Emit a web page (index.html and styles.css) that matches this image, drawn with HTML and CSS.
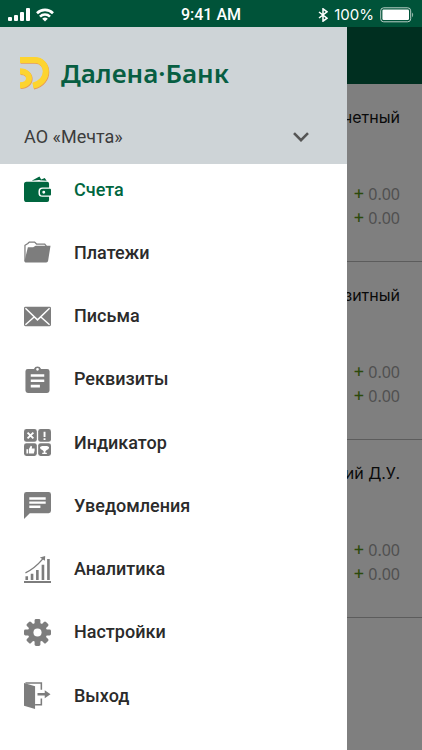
FILE: index.html
```html
<!DOCTYPE html>
<html lang="ru">
<head>
    <meta charset="UTF-8">
    <meta name="viewport" content="width=device-width, initial-scale=1.0">
    <title>Далена·Банк</title>
    <link rel="stylesheet" href="styles.css">
</head>
<body>
    <div class="status-bar">
        <div class="status-left">
            <svg width="24" height="14" viewBox="0 0 24 14" fill="#fff">
                <rect x="0" y="9" width="4" height="4" rx="1"/>
                <rect x="6" y="7" width="4" height="6" rx="1"/>
                <rect x="12" y="4" width="4" height="9" rx="1"/>
                <rect x="18" y="0" width="4" height="13" rx="1"/>
            </svg>
            <svg width="18" height="14" viewBox="0 0 18 14" fill="none" stroke="#fff" stroke-width="2.6">
                <path d="M1 5.2a11.4 11.4 0 0 1 16 0"/>
                <path d="M4 8.6a7 7 0 0 1 10 0"/>
                <path d="M9 13.5L6.2 10.8a4 4 0 0 1 5.6 0z" fill="#fff" stroke="none"/>
            </svg>
        </div>
        <div class="status-time">9:41 AM</div>
        <div class="status-right">
            <svg width="10" height="14" viewBox="0 0 10 14" fill="none" stroke="#fff" stroke-width="1.5">
                <path d="M1 4l8 6.2L5 13.2V.8l4 3L1 10"/>
            </svg>
            <span class="status-charge">100%</span>
            <svg width="34" height="16" viewBox="0 0 34 16">
                <rect x="0.7" y="0.8" width="30" height="14" rx="3" fill="none" stroke="#b9cfc7"/>
                <rect x="2.4" y="2.6" width="26.6" height="10.4" rx="1.2" fill="#fff"/>
                <path d="M32 5.6c1.6.9 1.6 3.7 0 4.6z" fill="#8fb2a5"/>
            </svg>
        </div>
    </div>

    <div class="screen">
        <div class="accounts">
            <div class="app-bar"></div>
            <div class="account">
                <div class="account-name">Расчетный</div>
                <div class="amount"><span class="plus">+</span> 0.00</div>
                <div class="amount"><span class="plus">+</span> 0.00</div>
            </div>
            <div class="account">
                <div class="account-name">Транзитный</div>
                <div class="amount"><span class="plus">+</span> 0.00</div>
                <div class="amount"><span class="plus">+</span> 0.00</div>
            </div>
            <div class="account">
                <div class="account-name">Текущий Д.У.</div>
                <div class="amount"><span class="plus">+</span> 0.00</div>
                <div class="amount"><span class="plus">+</span> 0.00</div>
            </div>
        </div>

        <div class="drawer">
            <div class="drawer-header">
                <div class="brand">
                    <svg width="31" height="34" viewBox="0 0 31 34" fill="none" stroke-width="6">
                        <g stroke="#e79a55">
                            <path d="M0.6 4.8H15c14.5 0 16 21.7-1.5 25.7"/>
                            <path d="M0.6 16c12 0 12 14 0 14"/>
                        </g>
                        <g stroke="#fdd42f">
                            <path d="M0 4h14.5c14.5 0 16 21.7-1.5 25.7"/>
                            <path d="M0 15.2c12 0 12 14 0 14"/>
                        </g>
                    </svg>
                    <span class="brand-name">Далена·Банк</span>
                </div>
                <button class="company" type="button">
                    <span>АО «Мечта»</span>
                    <svg width="16" height="10" viewBox="0 0 16 10" fill="none" stroke="#555" stroke-width="2.6">
                        <path d="M1 1.2l7 7 7-7"/>
                    </svg>
                </button>
            </div>

            <nav class="menu">
                <a class="menu-item active" href="#accounts">
                    <svg class="icon" viewBox="0 0 28 28">
                        <path d="M8 5L16 .6l2 3.4zM16 4.5L21.5 2l2 3z"/>
                        <path d="M3 6h21a2 2 0 0 1 2 2v4h-7a4 4 0 0 0-4 4v1.5a4 4 0 0 0 4 4h7V25a2 2 0 0 1-2 2H3a3 3 0 0 1-3-3V8.5A2.5 2.5 0 0 1 3 6z"/>
                        <path d="M19.5 13.3H27a1 1 0 0 1 1 1v5a1 1 0 0 1-1 1h-7.5a3 3 0 0 1-3-3v-1a3 3 0 0 1 3-3zm1 2a1.5 1.5 0 1 0 0 3 1.5 1.5 0 0 0 0-3z" fill-rule="evenodd"/>
                    </svg>
                    Счета
                </a>
                <a class="menu-item" href="#payments">
                    <svg class="icon" viewBox="0 0 28 28">
                        <path d="M1 23V6.5l3-1.8 1.5-1.5H11l2 2h8.5l1.5 2v1" fill="none" stroke="currentColor" stroke-width="1.3"/>
                        <path d="M4 8.5h5.5L12 7h15.5L25 22.5a2 2 0 0 1-2 1.8H1.5A1.5 1.5 0 0 1 .5 23z"/>
                    </svg>
                    Платежи
                </a>
                <a class="menu-item" href="#letters">
                    <svg class="icon" viewBox="0 0 28 28">
                        <rect x="0" y="4" width="28" height="20" rx="1.5"/>
                        <path d="M1.5 5.5l12.5 12 12.5-12M1.5 22.5l9-8M26.5 22.5l-9-8" fill="none" stroke="#fff" stroke-width="1.5"/>
                    </svg>
                    Письма
                </a>
                <a class="menu-item" href="#details">
                    <svg class="icon" viewBox="0 0 28 28">
                        <path d="M4 3h6.3a4 4 0 0 1 7.4 0H24a2.5 2.5 0 0 1 2.5 2.5v20A2.5 2.5 0 0 1 24 28H4a2.5 2.5 0 0 1-2.5-2.5v-20A2.5 2.5 0 0 1 4 3zm10-1a1.4 1.4 0 1 0 0 2.8A1.4 1.4 0 0 0 14 2zM7 8.5v2.7h14V8.5zm0 5.5v2.7h14V14zm0 5.5v2.7h9.5v-2.7z" fill-rule="evenodd"/>
                    </svg>
                    Реквизиты
                </a>
                <a class="menu-item" href="#indicator">
                    <svg class="icon" viewBox="0 0 28 28">
                        <rect x="0" y="0" width="13.3" height="13.3" rx="2.5"/>
                        <rect x="14.7" y="0" width="13.3" height="13.3" rx="2.5"/>
                        <rect x="0" y="14.7" width="13.3" height="13.3" rx="2.5"/>
                        <rect x="14.7" y="14.7" width="13.3" height="13.3" rx="2.5"/>
                        <path d="M3.7 3.7l6 6m0-6l-6 6M21.3 2.8v5.4m0 1.5v1.8" fill="none" stroke="#fff" stroke-width="2"/>
                        <path d="M2.5 21h1.7v4.5H2.5zM5 21l2-3.7c1.5 0 1.5 1 1 3h3v2l-.8 3.2H5z" fill="#fff"/>
                        <path d="M18 17.5h6.6v1H26c0 2-.8 3-2.4 3.3L22.2 23v1.5h1.5v1.3h-4.8v-1.3h1.5V23L19 21.8c-1.6-.3-2.4-1.3-2.4-3.3H18z" fill="#fff"/>
                    </svg>
                    Индикатор
                </a>
                <a class="menu-item" href="#notifications">
                    <svg class="icon" viewBox="0 0 28 28">
                        <path d="M2.5 0h23A2.5 2.5 0 0 1 28 2.5v17a2.5 2.5 0 0 1-2.5 2.5H6l-6 6V2.5A2.5 2.5 0 0 1 2.5 0zM5.5 5.5V8h17V5.5zm0 4.3v2.5h17V9.8zm0 4.2v2.5H17V14z" fill-rule="evenodd"/>
                    </svg>
                    Уведомления
                </a>
                <a class="menu-item" href="#analytics">
                    <svg class="icon" viewBox="0 0 28 28">
                        <path d="M0 26h28v2H0zM1.5 21h2.7v4H1.5zM7 18.5h2.7V25H7zM12.5 14.5h2.7V25h-2.7zM18.3 9H21v16h-2.7zM24 3h2.7v22H24z"/>
                        <path d="M1.5 17.5C9 14 14.5 9 20 2.5" fill="none" stroke="currentColor" stroke-width="1.4"/>
                        <path d="M16.5 1.5L22 0l-.3 5z"/>
                    </svg>
                    Аналитика
                </a>
                <a class="menu-item" href="#settings">
                    <svg class="icon" viewBox="0 0 28 28">
                        <rect x="11" y="0" width="6" height="28" rx="1.5"/>
                        <rect x="11" y="0" width="6" height="28" rx="1.5" transform="rotate(45 14 14)"/>
                        <rect x="11" y="0" width="6" height="28" rx="1.5" transform="rotate(90 14 14)"/>
                        <rect x="11" y="0" width="6" height="28" rx="1.5" transform="rotate(135 14 14)"/>
                        <circle cx="14" cy="14" r="10"/>
                        <circle cx="14" cy="14" r="4.2" fill="#fff"/>
                    </svg>
                    Настройки
                </a>
                <a class="menu-item" href="#logout">
                    <svg class="icon" viewBox="0 0 28 28">
                        <path d="M1.5 1H18v7M18 17v6.5h-6.5" fill="none" stroke="currentColor" stroke-width="1.6"/>
                        <path d="M0 1l11.5 3.5V28L0 24.5z"/>
                        <path d="M14 11.3h7.5V8.5l6 4.2-6 4.2v-2.8H14z"/>
                    </svg>
                    Выход
                </a>
            </nav>
        </div>
    </div>
</body>
</html>
```

FILE: styles.css
```css
* {
    margin: 0;
    padding: 0;
    box-sizing: border-box;
}

body {
    min-height: 100vh;
    display: flex;
    flex-direction: column;
    font-family: Roboto, "Liberation Sans", sans-serif;
    background-color: #7f7f7f;
    color: #2b2b2b;
}

.status-bar {
    display: grid;
    grid-template-columns: 1fr auto 1fr;
    align-items: center;
    height: 27px;
    padding: 2px 8px 0;
    background-color: #005339;
    color: #fff;
    font-size: 16px;
}

.status-left,
.status-right {
    display: flex;
    align-items: center;
    gap: 4px;
}

.status-right {
    justify-content: flex-end;
    gap: 6px;
}

.status-time {
    font-weight: 500;
}

.status-charge {
    font-family: Inter, "Liberation Sans", sans-serif;
    font-size: 15px;
}

.screen {
    position: relative;
    flex: 1;
    display: flex;
    flex-direction: column;
}

/* page under the open drawer */
.app-bar {
    height: 57px;
    background-color: #002f20;
}

.account {
    padding: 20px 22px 31px;
    border-bottom: 1px solid #5c5c5c;
    text-align: right;
}

.account-name {
    margin-bottom: 52px;
    font-family: Inter, "Liberation Sans", sans-serif;
    font-size: 16px;
    line-height: 26px;
    color: #0a0a0a;
}

.amount {
    font-family: "Noto Sans", sans-serif;
    font-size: 16px;
    line-height: 24px;
    color: #505050;
}

.plus {
    color: #2c4a0c;
    font-size: 18px;
    font-weight: 500;
    line-height: 1;
}

.drawer {
    position: absolute;
    top: 0;
    bottom: 0;
    left: 0;
    width: 82.2%;
    display: flex;
    flex-direction: column;
    background-color: #fff;
}

.drawer-header {
    padding: 28px 38px 14px 20px;
    background-color: #ced4d7;
}

.brand {
    display: flex;
    align-items: center;
    gap: 10px;
    height: 36px;
}

.brand-name {
    font-family: "Noto Sans", sans-serif;
    font-size: 26px;
    font-weight: 600;
    line-height: 36px;
    color: #075e42;
}

.company {
    display: flex;
    justify-content: space-between;
    align-items: center;
    width: 100%;
    margin-top: 33px;
    padding-left: 4px;
    border: none;
    background: none;
    font-family: inherit;
    font-size: 18px;
    line-height: 26px;
    color: #3c3c3c;
    cursor: pointer;
}

.menu {
    flex: 1;
    display: flex;
    flex-direction: column;
    justify-content: space-between;
    padding: 12px 24px 41px;
}

.menu-item {
    display: flex;
    align-items: center;
    gap: 23px;
    font-size: 18px;
    font-weight: 500;
    line-height: 26px;
    color: #2b2b2b;
    text-decoration: none;
}

.icon {
    width: 27px;
    height: 27px;
    fill: currentColor;
    color: #7d7d7d;
}

.active,
.active .icon {
    color: #00663f;
}
```
